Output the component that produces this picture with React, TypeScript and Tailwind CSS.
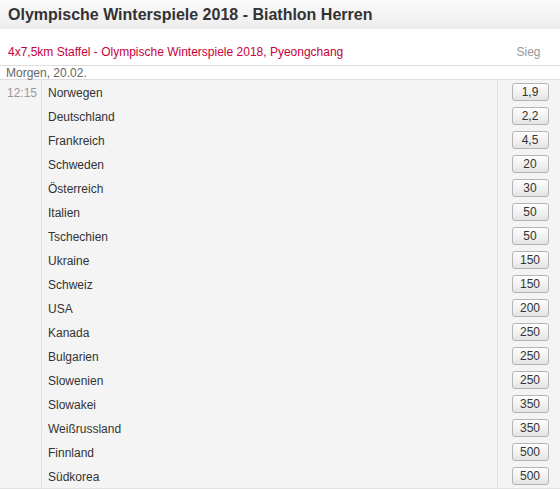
const rows: [string, string][] = [
  ["Norwegen", "1,9"],
  ["Deutschland", "2,2"],
  ["Frankreich", "4,5"],
  ["Schweden", "20"],
  ["Österreich", "30"],
  ["Italien", "50"],
  ["Tschechien", "50"],
  ["Ukraine", "150"],
  ["Schweiz", "150"],
  ["USA", "200"],
  ["Kanada", "250"],
  ["Bulgarien", "250"],
  ["Slowenien", "250"],
  ["Slowakei", "350"],
  ["Weißrussland", "350"],
  ["Finnland", "500"],
  ["Südkorea", "500"],
];

const App = () => {
  return (
    <div className="w-[560px] bg-white font-['Liberation_Sans',Arial,sans-serif] text-[12px] text-[#333]">
      <div className="h-[29px] bg-gradient-to-b from-[#fbfbfb] to-[#ececec] px-2">
        <h1 className="text-[16px] font-bold leading-[29px] text-[#333]">
          Olympische Winterspiele 2018 - Biathlon Herren
        </h1>
      </div>
      <div className="flex h-[37px] items-end justify-between border-b border-[#dedede] pb-[6px] pl-2">
        <span className="leading-[14px] text-[#c8003c]">
          4x7,5km Staffel - Olympische Winterspiele 2018, Pyeongchang
        </span>
        <span className="w-[63px] text-center leading-[14px] text-[#999]">Sieg</span>
      </div>
      <div className="h-[14px] border-b border-[#dedede] px-[6px] pt-px leading-[13px] text-[#666]">
        Morgen, 20.02.
      </div>
      <div className="flex border-b border-[#e2e2e2] bg-[#f4f4f4]">
        <div className="w-[42px] border-r border-[#e2e2e2]">
          <div className="h-6 pl-[7px] pt-px leading-6 text-[#999]">12:15</div>
        </div>
        <div className="flex-1">
          {rows.map(([name, odd]) => (
            <div className="flex h-6 items-center" key={name}>
              <span className="flex-1 pl-[6px] pt-[2px]">{name}</span>
              <div className="flex h-6 w-[63px] items-center justify-center border-l border-[#e2e2e2]">
                <button className="ml-[2px] h-[18px] w-[37px] rounded-[3px] border border-[#b4b4b4] bg-gradient-to-b from-white to-[#e4e4e4] text-center leading-[16px] text-[#333]">
                  {odd}
                </button>
              </div>
            </div>
          ))}
        </div>
      </div>
    </div>
  );
};

export default App;
